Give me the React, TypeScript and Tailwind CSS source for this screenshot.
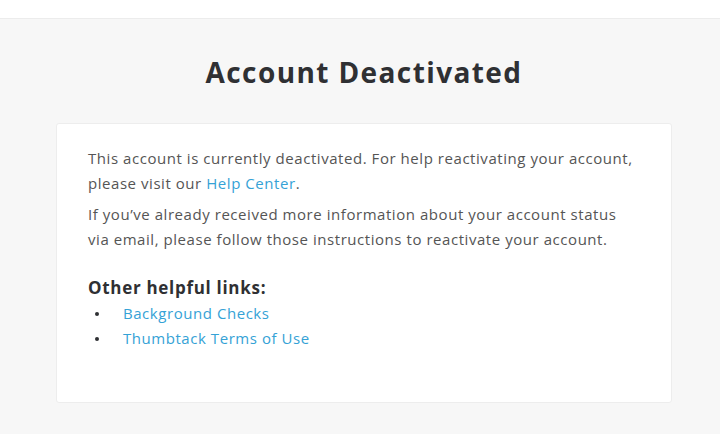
export default function App() {
  return (
    <div
      className="w-[720px] h-[434px] bg-[#f7f7f7] flex flex-col overflow-hidden"
      style={{ fontFamily: "'Open Sans', sans-serif" }}
    >
      <header className="h-[19px] bg-white border-b border-[#ececec] shrink-0" />
      <h1 className="mt-[37px] pl-[8px] text-center text-[28px] leading-[32px] font-bold tracking-[1.4px] text-[#2f3033]">
        Account Deactivated
      </h1>
      <section className="mt-[35px] ml-[56px] w-[616px] h-[280px] bg-white border border-[#ededed] rounded-[3px] pl-[31px] pr-4 pt-[22px] text-[15px] leading-[25px] tracking-[0.55px] text-[#555]">
        <p className="whitespace-nowrap">
          This account is currently deactivated. For help reactivating your account,
          <br />
          please visit our <a className="text-[#35a2d6]">Help Center</a>.
        </p>
        <p className="mt-[6px] whitespace-nowrap">
          If you’ve already received more information about your account status
          <br />
          via email, please follow those instructions to reactivate your account.
        </p>
        <h2 className="mt-[24px] text-[17px] leading-[24px] font-bold tracking-[0.7px] text-[#2f3033]">
          Other helpful links:
        </h2>
        <ul className="mt-[1px]">
          <li className="flex items-center">
            <span className="w-[35px] pl-[7px] flex">
              <span className="w-[4px] h-[4px] rounded-full bg-[#2f3033]" />
            </span>
            <a className="text-[#35a2d6]">Background Checks</a>
          </li>
          <li className="flex items-center">
            <span className="w-[35px] pl-[7px] flex">
              <span className="w-[4px] h-[4px] rounded-full bg-[#2f3033]" />
            </span>
            <a className="text-[#35a2d6]">Thumbtack Terms of Use</a>
          </li>
        </ul>
      </section>
    </div>
  );
}
